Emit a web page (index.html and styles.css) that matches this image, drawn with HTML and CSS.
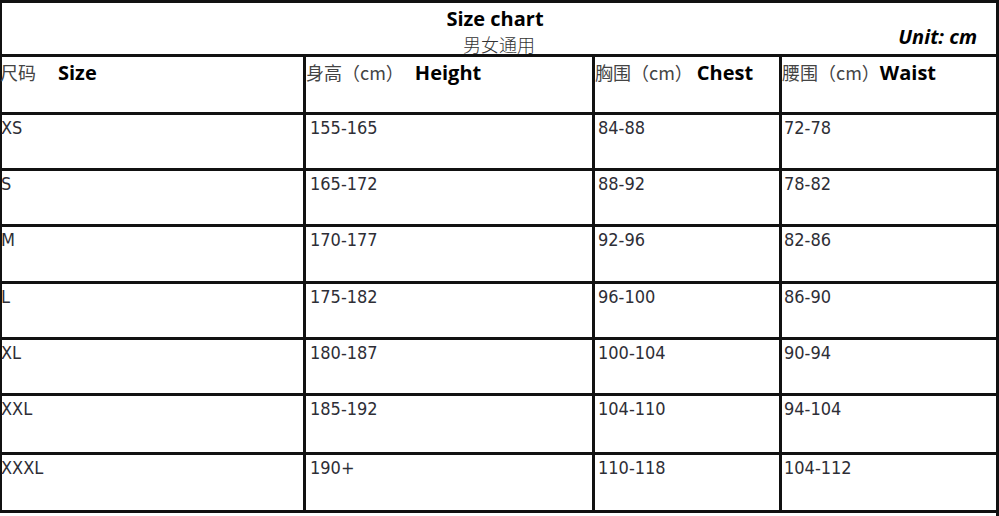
FILE: index.html
```html
<!DOCTYPE html>
<html lang="zh">
<head>
<meta charset="utf-8">
<title>Size chart</title>
<link rel="stylesheet" href="styles.css">
</head>
<body>
<div class="sheet">
  <div class="chart">
    <div class="title-cell">
      <div class="title-side"></div>
      <div class="title">
        <div class="title-en">Size chart</div>
        <div class="title-cn">男女通用</div>
      </div>
      <div class="unit">Unit: cm</div>
    </div>

    <div class="cell head c1"><span class="cn">尺码</span><span class="en en-size">Size</span></div>
    <div class="cell head c2"><span class="cn">身高（cm）</span><span class="en en-height">Height</span></div>
    <div class="cell head c3"><span class="cn">胸围（cm）</span><span class="en en-chest">Chest</span></div>
    <div class="cell head c4"><span class="cn">腰围（cm）</span><span class="en en-waist">Waist</span></div>

    <div class="cell d c1">XS</div><div class="cell d c2">155-165</div><div class="cell d c3">84-88</div><div class="cell d c4">72-78</div>
    <div class="cell d c1">S</div><div class="cell d c2">165-172</div><div class="cell d c3">88-92</div><div class="cell d c4">78-82</div>
    <div class="cell d c1">M</div><div class="cell d c2">170-177</div><div class="cell d c3">92-96</div><div class="cell d c4">82-86</div>
    <div class="cell d c1">L</div><div class="cell d c2">175-182</div><div class="cell d c3">96-100</div><div class="cell d c4">86-90</div>
    <div class="cell d c1">XL</div><div class="cell d c2">180-187</div><div class="cell d c3">100-104</div><div class="cell d c4">90-94</div>
    <div class="cell d c1">XXL</div><div class="cell d c2">185-192</div><div class="cell d c3">104-110</div><div class="cell d c4">94-104</div>
    <div class="cell d c1">XXXL</div><div class="cell d c2">190+</div><div class="cell d c3">110-118</div><div class="cell d c4">104-112</div>
  </div>
  <div class="tail"></div>
</div>
</body>
</html>
```
FILE: styles.css
```css
html, body {
  margin: 0;
  padding: 0;
  background: #fff;
}

.sheet {
  width: 999px;
}

.chart {
  display: grid;
  grid-template-columns: 301px 286px 184px 214px;
  grid-template-rows: 51px 55px 53px 53px 54px 53px 53px 56px 55px;
  gap: 3px;
  padding: 3px 3px 3px 2px;
  background: #111;
}

.title-cell {
  grid-column: 1 / -1;
  background: #fff;
  overflow: hidden;
  display: grid;
  grid-template-columns: 1fr auto 1fr;
  padding-top: 5px;
}

.title {
  text-align: center;
}

.title-en {
  font: 700 20px/22px "Open Sans", "Noto Sans CJK SC", sans-serif;
  color: #000;
  margin-right: 8px;
}

.title-cn {
  font: 300 18px/18px "Noto Sans CJK SC", sans-serif;
  color: #333;
  margin-top: 5px;
}

.unit {
  justify-self: end;
  align-self: end;
  margin: 0 19px 6px 0;
  font: italic 700 20px/22px "Open Sans", sans-serif;
  color: #000;
}

.cell {
  background: #fff;
}

.head {
  display: flex;
  align-items: baseline;
  padding-top: 4px;
}

.cn {
  font: 400 18px/22px "Noto Sans CJK SC", sans-serif;
  color: #444;
}

.en {
  font: 700 20px/22px "Open Sans", sans-serif;
  color: #000;
}

.head.c1 .cn {
  margin-left: -2px;
}

.en-size { margin-left: 22px; }
.en-height { margin-left: 11px; }
.en-chest { margin-left: 4px; }
.en-waist { margin-left: 0; }

.d {
  font-family: "DejaVu Sans Condensed", "DejaVu Sans", sans-serif;
  font-stretch: condensed;
  font-size: 18px;
  line-height: 21px;
  color: #2e2e36;
  padding: 2px 0 0 3px;
}

.d.c1 {
  padding-left: 0;
  text-indent: -1px;
}

.d.c2 {
  padding-left: 4px;
}

.d.c4 {
  padding-left: 2px;
}

.tail {
  height: 3px;
  border-right: 3px solid #111;
}
```
